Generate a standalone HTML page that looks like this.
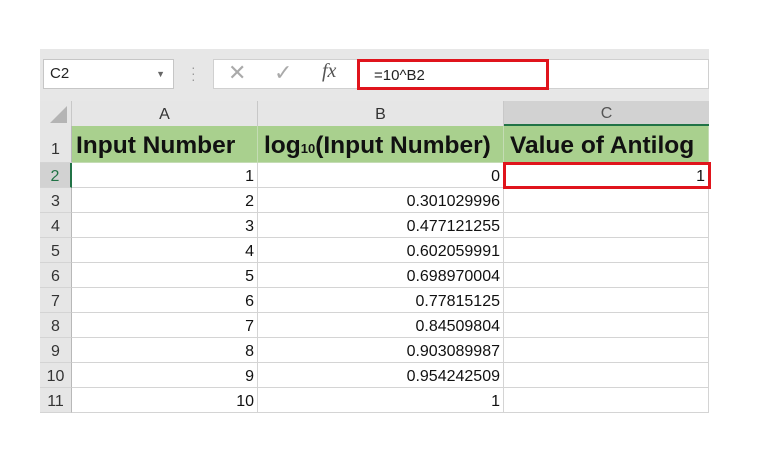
<!DOCTYPE html>
<html><head><style>
body{margin:0;width:768px;height:450px;background:#fff;position:relative;overflow:hidden;font-family:"Liberation Sans",sans-serif;}
.a{position:absolute;box-sizing:border-box;}
.cell{position:absolute;box-sizing:border-box;border-right:1px solid #d4d4d4;border-bottom:1px solid #d4d4d4;font-size:16px;line-height:27px;color:#111;}
.rn{background:#e6e6e6;color:#333;text-align:center;border-right:1px solid #b8b8b8;}
.r{text-align:right;padding-right:3px;}
.h{background:#a9d08e;font-weight:bold;font-size:24.5px;line-height:40px;color:#111;white-space:nowrap;padding-left:4px;}
</style></head><body>
<div class="a" style="left:40px;top:49px;width:669px;height:52px;background:#e7e7e7;"></div>
<div class="a" style="left:43px;top:59px;width:131px;height:30px;background:#fff;border:1px solid #c6c6c6;font-size:15px;line-height:28px;padding-left:6px;color:#222;">C2<span style="position:absolute;right:8px;top:0;font-size:9px;color:#666;">▼</span></div>
<div class="a" style="left:191px;top:64px;color:#999;font-size:14px;line-height:6px;">·<br>·<br>·</div>
<div class="a" style="left:213px;top:59px;width:496px;height:30px;background:#fff;border:1px solid #d0d0d0;"></div>
<div class="a" style="left:228px;top:60px;font-size:22px;color:#aaa;">✕</div>
<div class="a" style="left:274px;top:60px;font-size:22px;color:#aaa;">✓</div>
<div class="a" style="left:322px;top:60px;font-size:20px;color:#555;font-style:italic;font-family:'Liberation Serif',serif;">fx</div>
<div class="a" style="left:357px;top:59px;width:192px;height:31px;border:3px solid #e0141c;background:#fff;font-size:15px;line-height:27px;padding-left:14px;color:#222;">=10^B2</div>
<div class="a" style="left:40px;top:101px;width:32px;height:25px;background:#e6e6e6;border-right:1px solid #c8c8c8;"></div>
<div class="a" style="left:50px;top:106px;width:0;height:0;border-left:17px solid transparent;border-bottom:17px solid #b4b4b4;"></div>
<div class="a" style="left:72px;top:101px;width:186px;height:25px;background:#e6e6e6;border-right:1px solid #c8c8c8;text-align:center;font-size:16px;line-height:28px;color:#333;">A</div>
<div class="a" style="left:258px;top:101px;width:246px;height:25px;background:#e6e6e6;border-right:1px solid #c8c8c8;text-align:center;font-size:16px;line-height:28px;color:#333;">B</div>
<div class="a" style="left:504px;top:101px;width:205px;height:25px;background:#d2d2d2;border-bottom:2px solid #217346;text-align:center;font-size:16px;line-height:26px;color:#555;">C</div>
<div class="cell rn" style="left:40px;top:126px;width:32px;height:37px;line-height:48px;">1</div>
<div class="cell h" style="left:72px;top:126px;width:186px;height:37px;border-color:#c4dcb4;">Input Number</div>
<div class="cell h" style="left:258px;top:126px;width:246px;height:37px;border-color:#c4dcb4;padding-left:6px;">log<span style="font-size:13px;">10</span>(Input Number)</div>
<div class="cell h" style="left:504px;top:126px;width:205px;height:37px;border-color:#c4dcb4;padding-left:6px;">Value of Antilog</div>
<div id="rows"></div>
<script>
var b=["0","0.301029996","0.477121255","0.602059991","0.698970004","0.77815125","0.84509804","0.903089987","0.954242509","1"];
var h="";
for(var i=0;i<10;i++){var t=163+i*25;
h+='<div class="cell rn" style="left:40px;top:'+t+'px;width:32px;height:25px;'+(i==0?'background:#d2d2d2;color:#217346;border-right:2px solid #217346;':'')+'">'+(i+2)+'</div>';
h+='<div class="cell r" style="left:72px;top:'+t+'px;width:186px;height:25px;">'+(i+1)+'</div>';
h+='<div class="cell r" style="left:258px;top:'+t+'px;width:246px;height:25px;">'+b[i]+'</div>';
h+='<div class="cell r" style="left:504px;top:'+t+'px;width:205px;height:25px;">'+(i==0?'1':'')+'</div>';}
document.getElementById('rows').innerHTML=h;
</script>
<div class="a" style="left:503px;top:162px;width:208px;height:27px;border:3px solid #e0141c;"></div>
</body></html>
